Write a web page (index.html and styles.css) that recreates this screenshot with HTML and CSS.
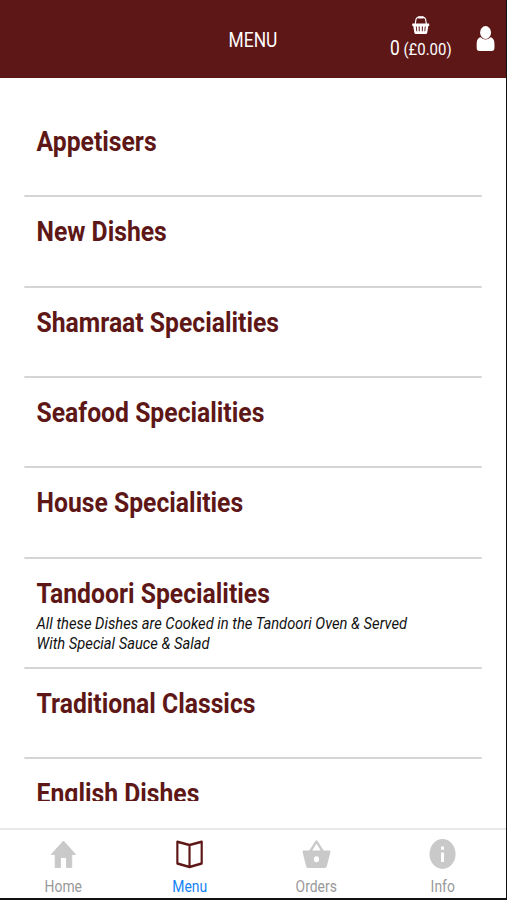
FILE: index.html
```html
<!DOCTYPE html>
<html lang="en">
<head>
<meta charset="utf-8">
<title>Menu</title>
<link rel="stylesheet" href="styles.css">
</head>
<body>
<div class="app">
  <header class="header">
    <h1 class="title">MENU</h1>
    <div class="basket">
      <svg class="basket-icon" viewBox="0 0 20 19" preserveAspectRatio="none">
        <path d="M3.500 9 L4.500 3.400 Q5 1.700 6.800 1.500 L13.200 1.500 Q15 1.700 15.500 3.400 L16.500 9" fill="none" stroke="#fff" stroke-width="1.300"/>
        <rect x="6.500" y="0.200" width="7" height="2.400" rx="1" fill="#fff"/>
        <path fill="#fff" fill-rule="evenodd" d="M.7 8h18.6q.7 0 .7.8v1q0 .8-.7.8h-.6l-1.3 7.2q-.2 1.2-1.2 1.2H3.8q-1 0-1.2-1.2L1.3 10.6H.7q-.7 0-.7-.8v-1Q0 8 .7 8zM4.3 11l.6 5h1l-.5-5zM7.5 11l.2 5h1.1v-5zM11.2 11v5h1.1l.2-5zM14.6 11l-.5 5h1l.6-5z"/>
      </svg>
      <span class="basket-text"><span class="count">0</span> (£0.00)</span>
    </div>
    <svg class="user-icon" viewBox="0 0 20 26" preserveAspectRatio="none">
      <path fill="#fff" d="M4.600 11.600C1.200 12.300 0 15.500 0 20v2.400Q0 26 3.400 26h13.200q3.400 0 3.400-3.600V20c0-4.500-1.200-7.700-4.600-8.400Q13 14 10 14t-5.400-2.400z"/>
      <ellipse cx="10" cy="6.700" rx="6" ry="6.700" fill="#fff"/>
    </svg>
  </header>
  <main class="list">
    <section class="item"><h2>Appetisers</h2></section>
    <section class="item"><h2>New Dishes</h2></section>
    <section class="item"><h2>Shamraat Specialities</h2></section>
    <section class="item"><h2>Seafood Specialities</h2></section>
    <section class="item"><h2>House Specialities</h2></section>
    <section class="item described"><h2>Tandoori Specialities</h2><p>All these Dishes are Cooked in the Tandoori Oven &amp; Served<br>With Special Sauce &amp; Salad</p></section>
    <section class="item"><h2>Traditional Classics</h2></section>
    <section class="item"><h2>English Dishes</h2></section>
  </main>
  <nav class="tabs">
    <a class="tab"><svg viewBox="0 0 34 34"><path fill="#c9c9c9" stroke="#c9c9c9" stroke-linejoin="round" d="M17 4 31 17.500H26.500V30.500H20.500V20.500H13.500V30.500H7.500V17.500H3z"/></svg><span>Home</span></a>
    <a class="tab active"><svg viewBox="0 0 34 34"><path fill="none" stroke="#5e1717" stroke-width="2.500" stroke-linejoin="round" d="M17 8 3 4.800V26.500L17 30 31 26.500V4.800zM17 8V30"/></svg><span>Menu</span></a>
    <a class="tab"><svg viewBox="0 0 34 34"><path fill="#c9c9c9" fill-rule="evenodd" d="M2 13.500H8.700L15.800 4Q17 2.500 18.200 4L25.300 13.500H32Q33.200 13.500 33 15L29 29Q28.400 31 26.500 31H7.500Q5.600 31 5 29L1 15Q.800 13.500 2 13.500zM12.200 13.500H21.800L17 6.500zM17 19.200a3 3 0 1 0 0 6 3 3 0 0 0 0-6z"/></svg><span>Orders</span></a>
    <a class="tab"><svg viewBox="0 0 34 34"><circle cx="17" cy="17" r="15" fill="#c9c9c9"/><path fill="#fff" d="M15.300 9.500h3.400v3.300h-3.400zM15.300 15.500h3.400V25h-3.400z"/></svg><span>Info</span></a>
  </nav>
</div>
</body>
</html>
```
FILE: styles.css
```css
* { box-sizing: border-box; }
html { overflow: hidden; }
body {
  margin: 0;
  width: 507px;
  height: 900px;
  overflow: hidden;
  background: #111;
  font-family: Roboto, "Liberation Sans", sans-serif;
}
/* The interface is laid out 582px wide and condensed to 506px. */
.app {
  width: 582px;
  height: 898px;
  display: flex;
  flex-direction: column;
  background: #fff;
  transform: scaleX(0.8694);
  transform-origin: 0 0;
}
.header {
  height: 78px;
  flex: none;
  display: flex;
  justify-content: center;
  background: #5e1717;
  color: #fff;
  position: relative;
}
.title {
  margin: 0;
  padding-top: 28px;
  font-size: 20px;
  line-height: 24px;
  font-weight: 400;
}
.basket {
  position: absolute;
  left: 434px;
  top: 16px;
  width: 100px;
  display: flex;
  flex-direction: column;
  align-items: center;
}
.basket-icon { width: 20px; height: 18px; }
.basket-text { font-size: 17.2px; line-height: 24px; margin-top: 2px; white-space: nowrap; }
.count { font-size: 20px; }
.user-icon { position: absolute; left: 548px; top: 26px; width: 21px; height: 25px; }
.list {
  height: 723px;
  flex: none;
  overflow: hidden;
  padding: 29px 28px 0;
}
.item {
  height: 90.35px;
  padding: 19px 14px 0;
  border-bottom: 2px solid #d5d5d5;
}
.item h2 {
  margin: 0;
  font-size: 28.45px;
  line-height: 32px;
  font-weight: 700;
  color: #5e1717;
  white-space: nowrap;
}
.item p {
  margin: 3px 0 0;
  font-size: 16.95px;
  line-height: 20px;
  font-style: italic;
  color: #111;
  white-space: nowrap;
}
.described { height: 110px; }
.tabs {
  margin-top: 27px;
  flex: 1;
  display: grid;
  grid-template-columns: repeat(4, 1fr);
  border-top: 2px solid #e8e8e8;
}
.tab {
  display: flex;
  flex-direction: column;
  align-items: center;
  padding-top: 7px;
  color: #999;
  font-size: 16px;
  line-height: 20px;
}
.tab svg { width: 34px; height: 34px; margin-bottom: 6px; }
.active { color: #1683f5; }
```
